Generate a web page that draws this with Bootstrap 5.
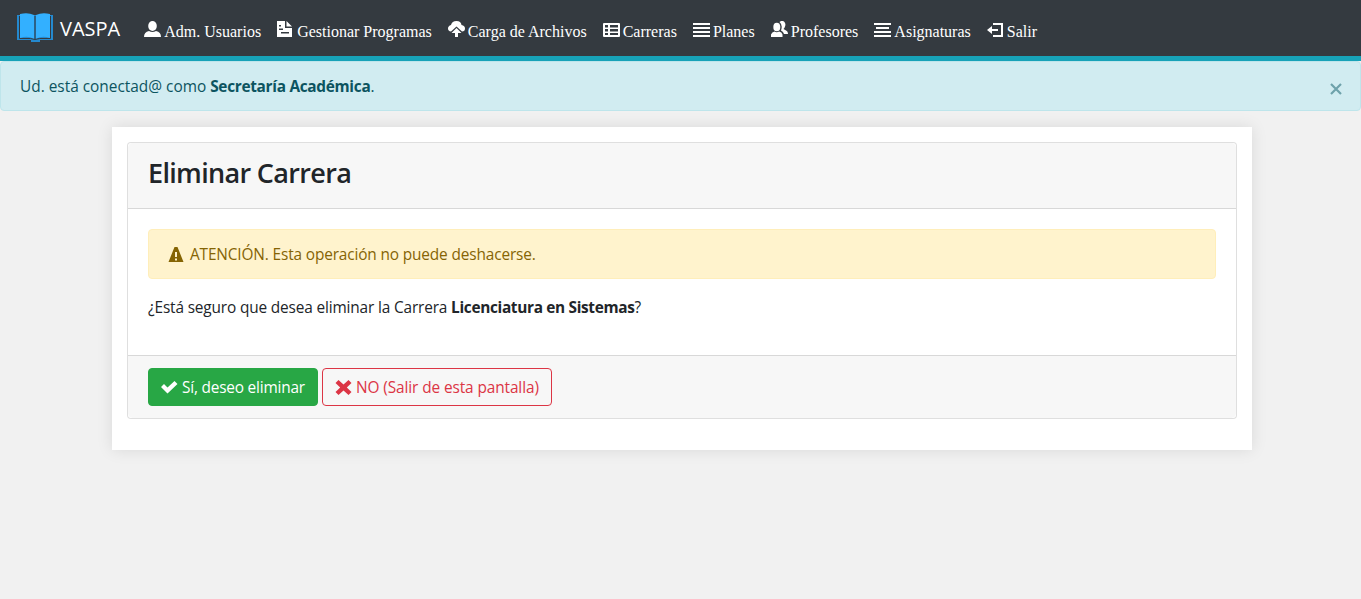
<!DOCTYPE html>
<html lang="es">
<head>
<meta charset="utf-8">
<meta name="viewport" content="width=device-width, initial-scale=1">
<title>VASPA - Eliminar Carrera</title>
<link rel="stylesheet" href="https://cdn.jsdelivr.net/npm/bootstrap@5.3.0/dist/css/bootstrap.min.css">
<style>
body{background:#f1f1f1;font-family:"Open Sans","Noto Sans",sans-serif;font-size:15.4px;line-height:24px;color:#212529;min-height:599px}
svg{fill:currentColor;flex:none}
.topbar{background:#343a40;border-bottom:5px solid #17a2b8;height:61px;padding:0 16px}
.brand-name{font-size:20px;line-height:30px;color:#fff;padding:2px 0 0 6px}
.topbar .nav-link{font:16px/24px "Liberation Serif",serif;color:#fff;padding:8px 0;display:flex;gap:3px;white-space:nowrap}
.topbar .nav-link svg{margin:1px 0 0 1px}
.topbar .navbar-nav{gap:15.05px;margin-left:23px;margin-top:8px}
.session{background:#d1ecf1;border:1px solid #bee5eb;color:#0c5460;border-radius:4px;height:50px;padding:13px 18px 11px 19px}
.session b{letter-spacing:-.3px}
.session button{border:0;background:none;color:#6ea2ab;padding:0;line-height:0;margin-top:3px}
.panel{width:1140px;margin:16px 0 0 112px;background:#fff;padding:15px 15px 31px;box-shadow:0 0 15px rgba(0,0,0,.1)}
.panel .card{border-color:rgba(0,0,0,.125);border-radius:4px;height:277px}
.panel .card-header{background:#f7f7f7;padding:11px 20px;height:66px;border-color:rgba(0,0,0,.125)}
.panel h3{font-size:27px;line-height:37px;font-weight:600;margin:0;letter-spacing:-.67px}
.panel .card-body{padding:20px}
.panel .card-footer{background:#f7f7f7;padding:12px 20px;height:63px;border-color:rgba(0,0,0,.125)}
.warn{background:#fff3cd;border:1px solid #ffeeba;color:#856404;border-radius:4px;height:50px;padding:13px 19px 11px;margin-bottom:16px;letter-spacing:-.14px;gap:6px}
.question{padding-top:1px;letter-spacing:-.15px}
.question b{letter-spacing:-.33px}
.panel .btn{font-size:15.4px;line-height:24px;height:38px;padding:7px 12px 5px;border-radius:4px;white-space:nowrap}
.panel .btn svg{margin-top:-1px}
.btn-yes{width:170px;background:#28a745;color:#fff;border-color:#28a745;letter-spacing:-.2px}
.btn-no{width:230px;color:#dc3545;border-color:#dc3545;letter-spacing:-.1px}
</style>
</head>
<body>
<nav class="topbar d-flex align-items-center">
  <a class="d-flex align-items-center text-decoration-none" href="#">
    <svg width="38" height="30" viewBox="0 0 38 30"><path fill="#2489cf" d="M1 2h36v25H24v2h-9v-2H1z"/><path fill="#33b0ff" d="M4 1q8-2 14 1v24q-6-4-14-1zM20 2q6-3 14-1v24q-8-3-14 1z"/><path stroke="#343a40" fill="none" d="M3.500 3v22.500h11l4.500 1 4.500-1h11V3M19 3v23"/></svg>
    <span class="brand-name">VASPA</span>
  </a>
  <div class="navbar-nav flex-row">
    <a class="nav-link" href="#"><svg width="17" height="17" viewBox="0 0 17 17"><ellipse cx="8.500" cy="5" rx="4.300" ry="5"/><path d="M0 16q0-5 5-6 3.500 2 7 0 5 1 5 6z"/></svg><span>Adm. Usuarios</span></a>
    <a class="nav-link" href="#"><svg width="17" height="17" viewBox="0 0 17 17"><path fill-rule="evenodd" d="M0 0h8v7h7v9H0zM2 4v1.500h2V4zM2 7.500V9h4V7.500zM4 11v1.500h8V11zM9.500 0 15 5.500H9.500z"/></svg><span>Gestionar Programas</span></a>
    <a class="nav-link" href="#"><svg width="17" height="17" viewBox="0 0 17 17"><path d="M3 10.500q-3-.5-3-3Q0 5 3 4q1-4 5.500-4Q13 0 13.500 4q3.500.5 3.500 3.500 0 3-3 3L8.500 5.500z"/><path d="m8.500 7 5 5H10v4H7v-4H3.500z"/></svg><span>Carga de Archivos</span></a>
    <a class="nav-link" href="#"><svg width="17" height="17" viewBox="0 0 17 17"><path fill-rule="evenodd" d="M1 2h15q1 0 1 1v12q0 1-1 1H1q-1 0-1-1V3q0-1 1-1zm1 2v2.500h3V4zm5 0v2.500h8V4zM2 8v2.500h3V8zm5 0v2.500h8V8zm-5 4v2h3v-2zm5 0v2h8v-2z"/></svg><span>Carreras</span></a>
    <a class="nav-link" href="#"><svg width="17" height="17" viewBox="0 0 17 17"><path d="M0 2h17v2H0zm0 4h17v2H0zm0 4h17v2H0zm0 4h17v2H0z"/></svg><span>Planes</span></a>
    <a class="nav-link" href="#"><svg width="17" height="17" viewBox="0 0 17 17"><ellipse cx="5.800" cy="6" rx="3.500" ry="4.300"/><path d="M0 16v-2.500Q1 11 3.500 10.500q2.300 1.300 4.600 0 2.700.5 3.400 3V16zM8.500 1q2-2 4.500-.5 2.200 2 1 5-.5 1.500-1.500 2.500l1.700 1q2.800 1 2.800 4h-4q-.5-2.500-3-3.500Q12 4 8.500 1z"/></svg><span>Profesores</span></a>
    <a class="nav-link" href="#"><svg width="17" height="17" viewBox="0 0 17 17"><path d="M0 2h17v2H0zm2 4h13v2H2zm-2 4h17v2H0zM0 14h17v2H0z"/></svg><span>Asignaturas</span></a>
    <a class="nav-link" href="#"><svg width="17" height="17" viewBox="0 0 17 17"><path d="M6 2h10v14H6v-2h8V4H6zM0 9l5-4v3h6v2H5v3z"/></svg><span>Salir</span></a>
  </div>
</nav>
<div class="session d-flex justify-content-between align-items-center">
  <div>Ud. está conectad@ como <b>Secretaría Académica</b>.</div>
  <button type="button" aria-label="Cerrar"><svg width="12" height="12" viewBox="0 0 12 12"><path fill="none" stroke="currentColor" stroke-width="2.200" d="m1 1 10 10M11 1 1 11"/></svg></button>
</div>
<main class="panel">
  <div class="card">
    <div class="card-header"><h3>Eliminar Carrera</h3></div>
    <div class="card-body">
      <div class="warn d-flex"><svg class="mt-1" width="16" height="16" viewBox="0 1 16 16"><path transform="translate(0 -1)" fill-rule="evenodd" d="M8 1q1 0 1.700 1.500L15.500 17H.5L6.300 2.500Q7 1 8 1zM7 7v5h2V7zm0 6.500v2h2v-2z"/></svg><span>ATENCIÓN. Esta operación no puede deshacerse.</span></div>
      <p class="question mb-0">¿Está seguro que desea eliminar la Carrera <b>Licenciatura en Sistemas</b>?</p>
    </div>
    <div class="card-footer d-flex gap-1">
      <button class="btn btn-yes d-flex align-items-center" type="button"><svg class="me-1" width="17" height="17" viewBox="0 0 17 17"><path d="m0 8 3-3 3.500 3.500L13.500 2 16.500 5 6.500 14.500z"/></svg><span>Sí, deseo eliminar</span></button>
      <button class="btn btn-no d-flex align-items-center" type="button"><svg class="me-1" width="17" height="17" viewBox="0 0 17 17"><path d="m3.500 1 5 4.500 5-4.500 3 3-4.700 4.500 4.700 4.500-3 3-5-4.500-5 4.500-3-3 4.700-4.500L.5 4z"/></svg><span>NO (Salir de esta pantalla)</span></button>
    </div>
  </div>
</main>
<script src="https://cdn.jsdelivr.net/npm/bootstrap@5.3.0/dist/js/bootstrap.bundle.min.js"></script>
</body>
</html>
